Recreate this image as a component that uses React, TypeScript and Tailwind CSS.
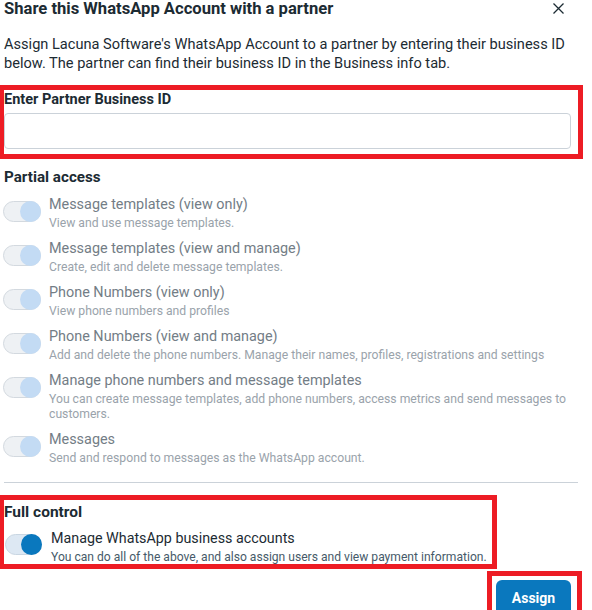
type Permission = {
  title: string
  description: string
}

const partialAccess: Permission[] = [
  { title: 'Message templates (view only)', description: 'View and use message templates.' },
  { title: 'Message templates (view and manage)', description: 'Create, edit and delete message templates.' },
  { title: 'Phone Numbers (view only)', description: 'View phone numbers and profiles' },
  {
    title: 'Phone Numbers (view and manage)',
    description: 'Add and delete the phone numbers. Manage their names, profiles, registrations and settings',
  },
  {
    title: 'Manage phone numbers and message templates',
    description: 'You can create message templates, add phone numbers, access metrics and send messages to customers.',
  },
  { title: 'Messages', description: 'Send and respond to messages as the WhatsApp account.' },
]

const Toggle = ({ active }: { active?: boolean }) => (
  <div
    className={
      active
        ? 'relative mt-[6px] h-[21px] w-[37px] shrink-0 rounded-full border border-[#c9d6e2] bg-[#dde8f3]'
        : 'relative mt-[6px] h-[21px] w-[38px] shrink-0 rounded-full border border-[#d3d9df] bg-[#eef1f4]'
    }
  >
    <div
      className={
        active
          ? 'absolute right-[-1px] top-[-1px] h-[21px] w-[21px] rounded-full bg-[#0a78be]'
          : 'absolute right-[-1px] top-[-1px] h-[21px] w-[21px] rounded-full bg-[#c3dbf4]'
      }
    />
  </div>
)

export default function App() {
  return (
    <div className="relative h-[610px] w-[592px] overflow-hidden bg-white font-['Roboto',sans-serif] text-[#1c2b33]">
      <div className="pl-[4px] pr-[21px]">
        <div className="flex items-start justify-between">
          <h2 className="text-[16.6px] font-bold leading-[18px]">Share this WhatsApp Account with a partner</h2>
          <svg className="mr-[7px] mt-[3px] h-[11px] w-[11px]" viewBox="0 0 11 11" fill="none">
            <path d="M0.5 0.5L10.5 10.5M10.5 0.5L0.5 10.5" stroke="#1c2b33" strokeWidth="1.3" />
          </svg>
        </div>

        <p className="mt-[17px] text-[14.6px] leading-[19px]">
          Assign Lacuna Software's WhatsApp Account to a partner by entering their business ID below. The partner can
          find their business ID in the Business info tab.
        </p>

        <label className="mt-[17px] block text-[14.5px] font-bold leading-[20px]">Enter Partner Business ID</label>
        <input className="mt-[3px] block h-[36px] w-full rounded-[4px] border border-[#cbd2d9] px-3 text-[15px] outline-none" />

        <h3 className="mt-[18px] text-[15.2px] font-bold leading-[20px]">Partial access</h3>

        <div className="mt-[8px] flex flex-col gap-[8px]">
          {partialAccess.map((p) => (
            <div key={p.title} className="-ml-[1px] flex gap-[8px]">
              <Toggle />
              <div className="min-w-0">
                <div className="text-[14.4px] leading-[20px] text-[#737d86]">{p.title}</div>
                <div className="mt-[1px] text-[12.2px] leading-[15px] text-[#9aa3ab]">{p.description}</div>
              </div>
            </div>
          ))}
        </div>

        <div className="mr-[-7px] mt-[16px] h-px bg-[#cbd2d9]" />

        <h3 className="mt-[19px] text-[15.5px] font-bold leading-[20px]">Full control</h3>
        <div className="mt-[6px] flex gap-[9px] pl-[1px]">
          <Toggle active />
          <div>
            <div className="text-[14.3px] leading-[20px] text-[#1c2b33]">Manage WhatsApp business accounts</div>
            <div className="mt-[2px] text-[12.1px] leading-[15px] text-[#465a69]">
              You can do all of the above, and also assign users and view payment information.
            </div>
          </div>
        </div>

        <div className="mt-[15px] flex justify-end">
          <button className="h-[40px] w-[75px] rounded-[6px] bg-[#0a78be] pb-[4px] text-[14px] font-bold text-white">
            Assign
          </button>
        </div>
      </div>

      {/* red annotation boxes drawn over the screenshot */}
      <div className="pointer-events-none absolute left-[-1px] top-[85px] h-[74px] w-[584px] border-[5px] border-[#ed1c24]" />
      <div className="pointer-events-none absolute left-[-1px] top-[495px] h-[74px] w-[498px] border-[5px] border-[#ed1c24]" />
      <div className="pointer-events-none absolute left-[487px] top-[571px] h-[50px] w-[95px] border-[5px] border-[#ed1c24]" />
    </div>
  )
}
